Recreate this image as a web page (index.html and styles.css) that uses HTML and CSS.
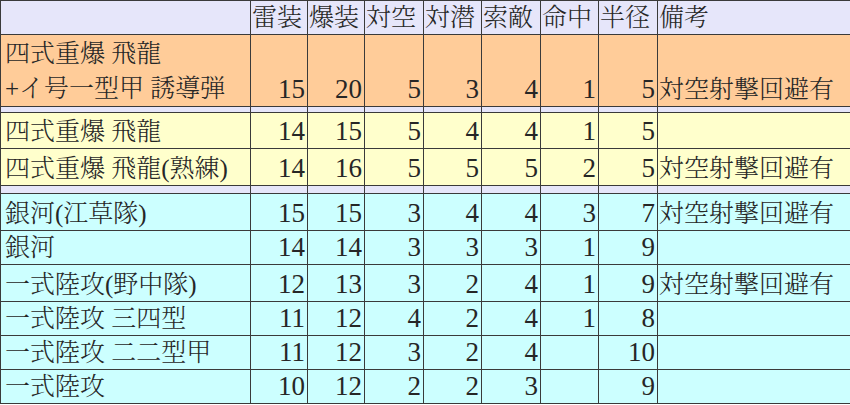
FILE: index.html
```html
<!DOCTYPE html>
<html lang="ja">
<head>
<meta charset="utf-8">
<link rel="stylesheet" href="styles.css">
</head>
<body>
<table class="grid">
  <colgroup>
    <col class="c-name"><col class="c-n1"><col class="c-n2"><col class="c-n3"><col class="c-n4"><col class="c-n5"><col class="c-n6"><col class="c-n7"><col class="c-note">
  </colgroup>
  <thead>
    <tr class="head">
      <th></th><th>雷装</th><th>爆装</th><th>対空</th><th>対潜</th><th>索敵</th><th>命中</th><th>半径</th><th>備考</th>
    </tr>
  </thead>
  <tbody>
    <tr class="orange tall">
      <td class="name">四式重爆 飛龍<br>+イ号一型甲 誘導弾</td><td>15</td><td>20</td><td>5</td><td>3</td><td>4</td><td>1</td><td>5</td><td class="note">対空射撃回避有</td>
    </tr>
    <tr class="band b1"><td></td><td></td><td></td><td></td><td></td><td></td><td></td><td></td><td></td></tr>
    <tr class="yellow r1">
      <td class="name">四式重爆 飛龍</td><td>14</td><td>15</td><td>5</td><td>4</td><td>4</td><td>1</td><td>5</td><td class="note"></td>
    </tr>
    <tr class="yellow r2">
      <td class="name">四式重爆 飛龍(熟練)</td><td>14</td><td>16</td><td>5</td><td>5</td><td>5</td><td>2</td><td>5</td><td class="note">対空射撃回避有</td>
    </tr>
    <tr class="band b2"><td></td><td></td><td></td><td></td><td></td><td></td><td></td><td></td><td></td></tr>
    <tr class="cyan r3">
      <td class="name">銀河(江草隊)</td><td>15</td><td>15</td><td>3</td><td>4</td><td>4</td><td>3</td><td>7</td><td class="note">対空射撃回避有</td>
    </tr>
    <tr class="cyan r4">
      <td class="name">銀河</td><td>14</td><td>14</td><td>3</td><td>3</td><td>3</td><td>1</td><td>9</td><td class="note"></td>
    </tr>
    <tr class="cyan r3">
      <td class="name">一式陸攻(野中隊)</td><td>12</td><td>13</td><td>3</td><td>2</td><td>4</td><td>1</td><td>9</td><td class="note">対空射撃回避有</td>
    </tr>
    <tr class="cyan r4">
      <td class="name">一式陸攻 三四型</td><td>11</td><td>12</td><td>4</td><td>2</td><td>4</td><td>1</td><td>8</td><td class="note"></td>
    </tr>
    <tr class="cyan r4">
      <td class="name">一式陸攻 二二型甲</td><td>11</td><td>12</td><td>3</td><td>2</td><td>4</td><td></td><td>10</td><td class="note"></td>
    </tr>
    <tr class="cyan r4">
      <td class="name">一式陸攻</td><td>10</td><td>12</td><td>2</td><td>2</td><td>3</td><td></td><td>9</td><td class="note"></td>
    </tr>
  </tbody>
</table>
</body>
</html>
```

FILE: styles.css
```css
html, body {
  margin: 0;
  padding: 0;
  background: #ffffff;
}

.grid {
  border-collapse: collapse;
  table-layout: fixed;
  width: 850px;
  font-family: "Liberation Serif", "Noto Serif CJK JP", "Noto Sans CJK JP", serif;
  font-size: 27px;
  font-weight: 300;
  line-height: 33px;
  color: #262626;
}

.c-name { width: 250px; }
.c-n1, .c-n2 { width: 57px; }
.c-n3, .c-n5, .c-n7 { width: 59px; }
.c-n4, .c-n6 { width: 58px; }
.c-note { width: 193px; }

.grid th,
.grid td {
  border: 1px solid #3a3a3a;
  padding: 0 2px 0 2px;
  text-align: right;
  vertical-align: bottom;
  white-space: nowrap;
  overflow: hidden;
}

.grid th {
  font-weight: 300;
  font-size: 25px;
  text-align: left;
  padding-left: 1px;
  background: #e6e6fa;
}

.head { height: 34px; }

.grid td.name {
  font-size: 25px;
  text-align: left;
  padding-left: 4px;
}

.grid td.note {
  font-size: 25px;
  text-align: left;
  padding-left: 1px;
}

.orange td { background: #ffcc99; }
.yellow td { background: #ffffcc; }
.cyan td { background: #ccffff; }
.band td { background: #e6e6fa; padding: 0; line-height: 0; }

.tall { height: 72px; }
.tall td.name { line-height: 35px; }
.b1 { height: 6px; }
.b2 { height: 8px; }
.r1 { height: 36px; }
.r2 { height: 37px; }
.r3 { height: 37px; }
.r4 { height: 34px; }
```
